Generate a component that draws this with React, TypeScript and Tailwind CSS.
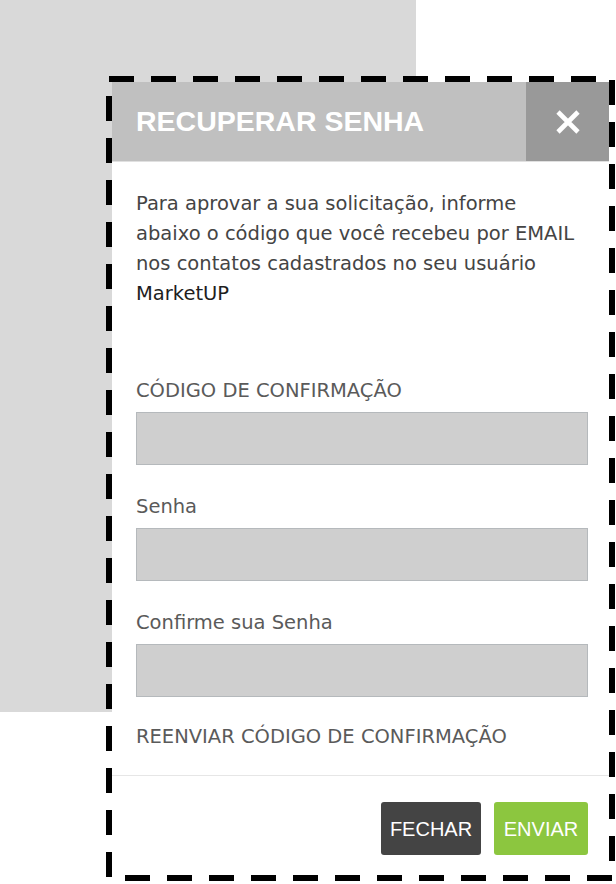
import React from "react";

export default function App() {
  const body = { fontFamily: "'DejaVu Sans', Verdana, sans-serif" };
  const arial = { fontFamily: "'Liberation Sans', Arial, sans-serif" };
  return (
    <div className="relative w-[616px] h-[884px] bg-white overflow-hidden">
      <div className="w-[416px] h-[712px] bg-[#d9d9d9]" />

      <div className="absolute left-[112px] top-[82px] w-[497px] h-[793px] bg-white flex flex-col">
        <div className="flex h-[80px] bg-[#c0c0c0] border-b border-[#e0e0e0]">
          <div className="flex-1 flex items-center pl-[24px] text-white text-[28.5px] font-bold" style={arial}>
            RECUPERAR SENHA
          </div>
          <div className="w-[83px] bg-[#999999] flex items-center justify-center">
            <svg width="26" height="26" viewBox="0 0 26 26">
              <path d="M3 3 L23 23 M23 3 L3 23" stroke="white" strokeWidth="4.6" strokeLinecap="butt" />
            </svg>
          </div>
        </div>

        <div className="flex flex-col px-[24px] pr-[21px]" style={body}>
          <p className="mt-[27px] text-[19.5px] leading-[30px] text-[#444]">
            Para aprovar a sua solicitação, informe
            <br />
            abaixo o código que você recebeu por EMAIL
            <br />
            nos contatos cadastrados no seu usuário
            <br />
            <span className="text-[#1e1e1e]">MarketUP</span>
          </p>

          <div className="mt-[70px] flex flex-col gap-[30px]">
            {["CÓDIGO DE CONFIRMAÇÃO", "Senha", "Confirme sua Senha"].map((l) => (
              <div key={l} className="flex flex-col">
                <div className="text-[19.5px] leading-[24px] text-[#5a5a5a]">{l}</div>
                <div className="mt-[9px] h-[53px] bg-[#cfcfcf] border border-[#b5b9bc]" />
              </div>
            ))}
          </div>

          <div className="mt-[28px] text-[19.5px] leading-[24px] text-[#5a5a5a]">
            REENVIAR CÓDIGO DE CONFIRMAÇÃO
          </div>
        </div>

        <div className="mt-[26px] border-t border-[#e6e6e6] flex justify-end gap-[13px] pt-[26px] pr-[21px]">
          <button className="w-[100px] h-[53px] rounded-[3px] bg-[#444444] text-white text-[20px]" style={arial}>
            FECHAR
          </button>
          <button className="w-[94px] h-[53px] rounded-[3px] bg-[#8cc63f] text-white text-[20px]" style={arial}>
            ENVIAR
          </button>
        </div>
      </div>

      <svg className="absolute left-[106px] top-[76px]" width="510" height="806" viewBox="0 0 510 806">
        <rect x="3" y="3" width="503" height="799" fill="none" stroke="black" strokeWidth="6" strokeDasharray="25 17" />
      </svg>
    </div>
  );
}
